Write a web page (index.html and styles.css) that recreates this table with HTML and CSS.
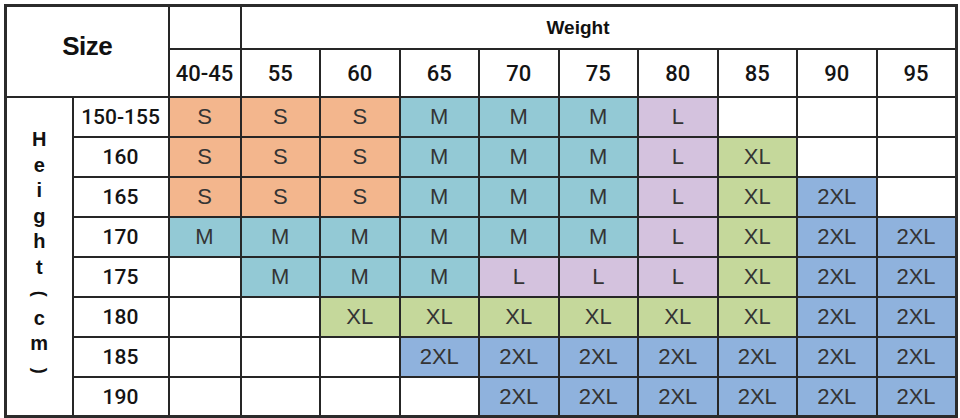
FILE: index.html
```html
<!DOCTYPE html>
<html>
<head>
<meta charset="utf-8">
<link rel="stylesheet" href="styles.css">
</head>
<body>
<table class="chart">
  <colgroup>
    <col class="c-label"><col class="c-height"><col class="c-first">
    <col class="c-w"><col class="c-w"><col class="c-w"><col class="c-w"><col class="c-w">
    <col class="c-w"><col class="c-w"><col class="c-w"><col class="c-w">
  </colgroup>
  <tr class="r-top">
    <th class="size" colspan="2" rowspan="2">Size</th>
    <th class="blank"></th>
    <th class="weight" colspan="9">Weight</th>
  </tr>
  <tr class="r-head">
    <th class="num">40-45</th><th class="num">55</th><th class="num">60</th><th class="num">65</th><th class="num">70</th>
    <th class="num">75</th><th class="num">80</th><th class="num">85</th><th class="num">90</th><th class="num">95</th>
  </tr>
  <tr>
    <th class="vlabel" rowspan="8">
      <div class="vtext">
        <span>H</span><span>e</span><span>i</span><span>g</span><span>h</span><span>t</span>
        <span><i class="rot">(</i></span><span>c</span><span>m</span><span><i class="rot">)</i></span>
      </div>
    </th>
    <th class="num h">150-155</th>
    <td class="s">S</td><td class="s">S</td><td class="s">S</td><td class="m">M</td><td class="m">M</td><td class="m">M</td><td class="l">L</td><td></td><td></td><td></td>
  </tr>
  <tr>
    <th class="num h">160</th>
    <td class="s">S</td><td class="s">S</td><td class="s">S</td><td class="m">M</td><td class="m">M</td><td class="m">M</td><td class="l">L</td><td class="xl">XL</td><td></td><td></td>
  </tr>
  <tr>
    <th class="num h">165</th>
    <td class="s">S</td><td class="s">S</td><td class="s">S</td><td class="m">M</td><td class="m">M</td><td class="m">M</td><td class="l">L</td><td class="xl">XL</td><td class="xxl">2XL</td><td></td>
  </tr>
  <tr>
    <th class="num h">170</th>
    <td class="m">M</td><td class="m">M</td><td class="m">M</td><td class="m">M</td><td class="m">M</td><td class="m">M</td><td class="l">L</td><td class="xl">XL</td><td class="xxl">2XL</td><td class="xxl">2XL</td>
  </tr>
  <tr>
    <th class="num h">175</th>
    <td></td><td class="m">M</td><td class="m">M</td><td class="m">M</td><td class="l">L</td><td class="l">L</td><td class="l">L</td><td class="xl">XL</td><td class="xxl">2XL</td><td class="xxl">2XL</td>
  </tr>
  <tr>
    <th class="num h">180</th>
    <td></td><td></td><td class="xl">XL</td><td class="xl">XL</td><td class="xl">XL</td><td class="xl">XL</td><td class="xl">XL</td><td class="xl">XL</td><td class="xxl">2XL</td><td class="xxl">2XL</td>
  </tr>
  <tr>
    <th class="num h">185</th>
    <td></td><td></td><td></td><td class="xxl">2XL</td><td class="xxl">2XL</td><td class="xxl">2XL</td><td class="xxl">2XL</td><td class="xxl">2XL</td><td class="xxl">2XL</td><td class="xxl">2XL</td>
  </tr>
  <tr class="r-last">
    <th class="num h">190</th>
    <td></td><td></td><td></td><td></td><td class="xxl">2XL</td><td class="xxl">2XL</td><td class="xxl">2XL</td><td class="xxl">2XL</td><td class="xxl">2XL</td><td class="xxl">2XL</td>
  </tr>
</table>
</body>
</html>
```

FILE: styles.css
```css
html, body {
  margin: 0;
  padding: 0;
  background: #ffffff;
}

body {
  padding: 4px 0 0 4px;
}

.chart {
  border-collapse: collapse;
  table-layout: fixed;
  width: 951px;
  border: 3px solid #2b2b2b;
  font-family: "Liberation Sans", Arial, sans-serif;
  color: #333333;
}

.c-label { width: 67px; }
.c-height { width: 96px; }
.c-first { width: 72px; }
.c-w { width: 79.5px; }

.chart th,
.chart td {
  border: 2px solid #262626;
  padding: 0;
  text-align: center;
  vertical-align: middle;
  height: 38px;
}

.chart td {
  font-size: 22px;
  font-weight: 400;
  color: #343434;
}

.r-top th { height: 41px; }
.r-head th { height: 46px; }
.r-last th, .r-last td { height: 37px; }

.size {
  font-size: 26px;
  font-weight: 700;
  letter-spacing: -0.5px;
  color: #111111;
  padding-bottom: 10px !important;
}

.weight {
  font-size: 19px;
  font-weight: 700;
  color: #111111;
  padding-right: 40px !important;
}

.num {
  font-family: Roboto, "Liberation Sans", sans-serif;
  font-size: 22px;
  font-weight: 500;
  color: #141414;
}

.num.h {
  font-size: 21px;
}

.vlabel {
  color: #111111;
}

.vtext {
  display: flex;
  flex-direction: column;
  align-items: center;
  font-size: 20px;
  font-weight: 700;
  line-height: 25.5px;
  padding-bottom: 4px;
}

.vtext span {
  display: block;
  height: 25.5px;
}

.rot {
  display: inline-block;
  font-style: normal;
  font-weight: 700;
  font-size: 18px;
  transform: rotate(90deg);
}

.s { background: #f3b68d; }
.m { background: #93c9d5; }
.l { background: #d4c2de; }
.xl { background: #c5d89b; }
.xxl { background: #8fb2dd; }
```
